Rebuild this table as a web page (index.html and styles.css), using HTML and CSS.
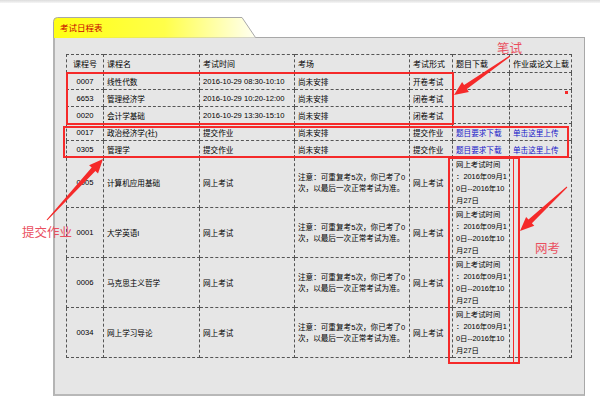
FILE: index.html
```html
<!DOCTYPE html>
<html lang="zh-CN">
<head>
<meta charset="utf-8">
<title>考试日程表</title>
<link rel="stylesheet" href="styles.css">
</head>
<body>
<div class="topbar"></div>
<div class="frame">
  <div class="tab">
    <svg class="tab-bg" width="204" height="21" viewBox="0 0 204 21">
      <defs>
        <linearGradient id="tabg" x1="0" y1="0" x2="1" y2="0">
          <stop offset="0" stop-color="#ffff14"/>
          <stop offset="0.55" stop-color="#ffff4a"/>
          <stop offset="1" stop-color="#fffff2"/>
        </linearGradient>
      </defs>
      <path d="M0.5,21 V4.5 Q0.5,0.5 4.5,0.5 H189 L202.5,20.5" fill="url(#tabg)" stroke="#a8a8a8" stroke-width="1"/>
    </svg>
    <span class="tab-title">考试日程表</span>
  </div>
  <div class="panel">
    <table class="grid">
      <colgroup>
        <col class="c-no"><col class="c-name"><col class="c-time"><col class="c-room"><col class="c-form"><col class="c-down"><col class="c-up">
      </colgroup>
      <tr class="head">
        <td class="ctr">课程号</td><td>课程名</td><td>考试时间</td><td>考场</td><td>考试形式</td><td>题目下载</td><td>作业或论文上载</td>
      </tr>
      <tr class="row">
        <td class="ctr">0007</td><td>线性代数</td><td>2016-10-29 08:30-10:10</td><td>尚未安排</td><td>开卷考试</td><td></td><td></td>
      </tr>
      <tr class="row">
        <td class="ctr">6653</td><td>管理经济学</td><td>2016-10-29 10:20-12:00</td><td>尚未安排</td><td>闭卷考试</td><td></td><td></td>
      </tr>
      <tr class="row">
        <td class="ctr">0020</td><td>会计学基础</td><td>2016-10-29 13:30-15:10</td><td>尚未安排</td><td>闭卷考试</td><td></td><td></td>
      </tr>
      <tr class="row">
        <td class="ctr">0017</td><td>政治经济学(社)</td><td>提交作业</td><td>尚未安排</td><td>提交作业</td><td><a class="lnk">题目要求下载</a></td><td><a class="lnk">单击这里上传</a></td>
      </tr>
      <tr class="row">
        <td class="ctr">0305</td><td>管理学</td><td>提交作业</td><td>尚未安排</td><td>提交作业</td><td><a class="lnk">题目要求下载</a></td><td><a class="lnk">单击这里上传</a></td>
      </tr>
      <tr class="big">
        <td class="ctr">0005</td><td>计算机应用基础</td><td>网上考试</td><td class="note">注意：可重复考5次，你已考了0<br>次，以最后一次正常考试为准。</td><td>网上考试</td><td class="when">网上考试时间<br>：2016年09月1<br>0日--2016年10<br>月27日</td><td></td>
      </tr>
      <tr class="big">
        <td class="ctr">0001</td><td>大学英语I</td><td>网上考试</td><td class="note">注意：可重复考5次，你已考了0<br>次，以最后一次正常考试为准。</td><td>网上考试</td><td class="when">网上考试时间<br>：2016年09月1<br>0日--2016年10<br>月27日</td><td></td>
      </tr>
      <tr class="big">
        <td class="ctr">0006</td><td>马克思主义哲学</td><td>网上考试</td><td class="note">注意：可重复考5次，你已考了0<br>次，以最后一次正常考试为准。</td><td>网上考试</td><td class="when">网上考试时间<br>：2016年09月1<br>0日--2016年10<br>月27日</td><td></td>
      </tr>
      <tr class="big">
        <td class="ctr">0034</td><td>网上学习导论</td><td>网上考试</td><td class="note">注意：可重复考5次，你已考了0<br>次，以最后一次正常考试为准。</td><td>网上考试</td><td class="when">网上考试时间<br>：2016年09月1<br>0日--2016年10<br>月27日</td><td></td>
      </tr>
    </table>
  </div>
</div>
<svg class="marks" width="600" height="400" viewBox="0 0 600 400">
  <g fill="none" stroke="#f52a2a" stroke-width="2">
    <rect x="67" y="73" width="386" height="51"/>
    <rect x="64" y="127" width="504" height="30"/>
    <rect x="449" y="158" width="70" height="205"/>
  </g>
  <line x1="513.5" y1="158" x2="513.5" y2="362" stroke="#f52a2a" stroke-width="1"/>
  <g fill="#f52a2a">
    <polygon points="509.7,55.6 464.1,85.0 462.1,82.1 454,95 468.9,91.9 466.9,89.1 510.3,56.4"/>
    <polygon points="47.4,220.3 95.4,171.0 98.0,173.4 103,159 89.1,165.3 91.7,167.6 46.6,219.7"/>
    <polygon points="566.7,186.6 528.5,219.6 526.1,217.1 520,231 534.3,225.8 531.9,223.3 567.3,187.4"/>
    <rect x="565" y="91" width="3" height="3"/>
  </g>
  <g class="note-text">
    <text x="497" y="53">笔试</text>
    <text x="22" y="237">提交作业</text>
    <text x="535" y="253">网考</text>
  </g>
</svg>
</body>
</html>
```

FILE: styles.css
```css
html, body {
  margin: 0;
  padding: 0;
  background: #ffffff;
}
body {
  position: relative;
  width: 600px;
  height: 400px;
  overflow: hidden;
  font-family: "Liberation Sans", "Noto Sans CJK SC", sans-serif;
}
.topbar {
  height: 3px;
  background: linear-gradient(#dcdcdc, #f6f6f6);
}
.frame {
  padding: 14px 0 0 53px;
  width: 532px;
}
.tab {
  position: relative;
  width: 204px;
  height: 20px;
}
.tab-bg {
  position: absolute;
  left: 0;
  top: 0;
}
.tab-title {
  position: relative;
  display: block;
  padding-left: 7px;
  line-height: 20px;
  font-size: 8.5px;
  color: #c80000;
  font-family: "Noto Sans CJK SC", sans-serif;
}
.panel {
  box-sizing: border-box;
  width: 532px;
  height: 359px;
  background: #e6e6e6;
  border: 1px solid #a8a8a8;
  border-left: 2px solid #b4b4b4;
  border-bottom: 2px solid #b8b8b8;
  padding: 16px 0 0 11px;
}
.grid {
  border-collapse: collapse;
  table-layout: fixed;
  width: 506px;
  font-size: 7.6px;
  color: #000;
  background: #e6e6e6;
}
.grid td {
  border: 1px dashed #555555;
  padding: 0 2px 0 3px;
  white-space: nowrap;
  overflow: hidden;
  text-align: left;
  vertical-align: middle;
}
.grid .ctr {
  text-align: center;
  padding: 0;
}
.c-no { width: 37px; }
.c-name { width: 96px; }
.c-time { width: 95px; }
.c-room { width: 115px; }
.c-form { width: 43px; }
.c-down { width: 57px; }
.c-up { width: 62px; }
.head {
  height: 18px;
  font-size: 8px;
}
.row {
  height: 17px;
}
.big {
  height: 50px;
}
.note {
  line-height: 11px;
}
.when {
  line-height: 12px;
  vertical-align: top;
  padding-top: 1px;
  font-size: 7.4px;
}
.lnk {
  color: #1515c8;
}
.marks {
  position: absolute;
  left: 0;
  top: 0;
  pointer-events: none;
}
.note-text {
  fill: #ea4f5f;
  font-family: "Noto Sans CJK SC", sans-serif;
  font-size: 12.5px;
}
```
